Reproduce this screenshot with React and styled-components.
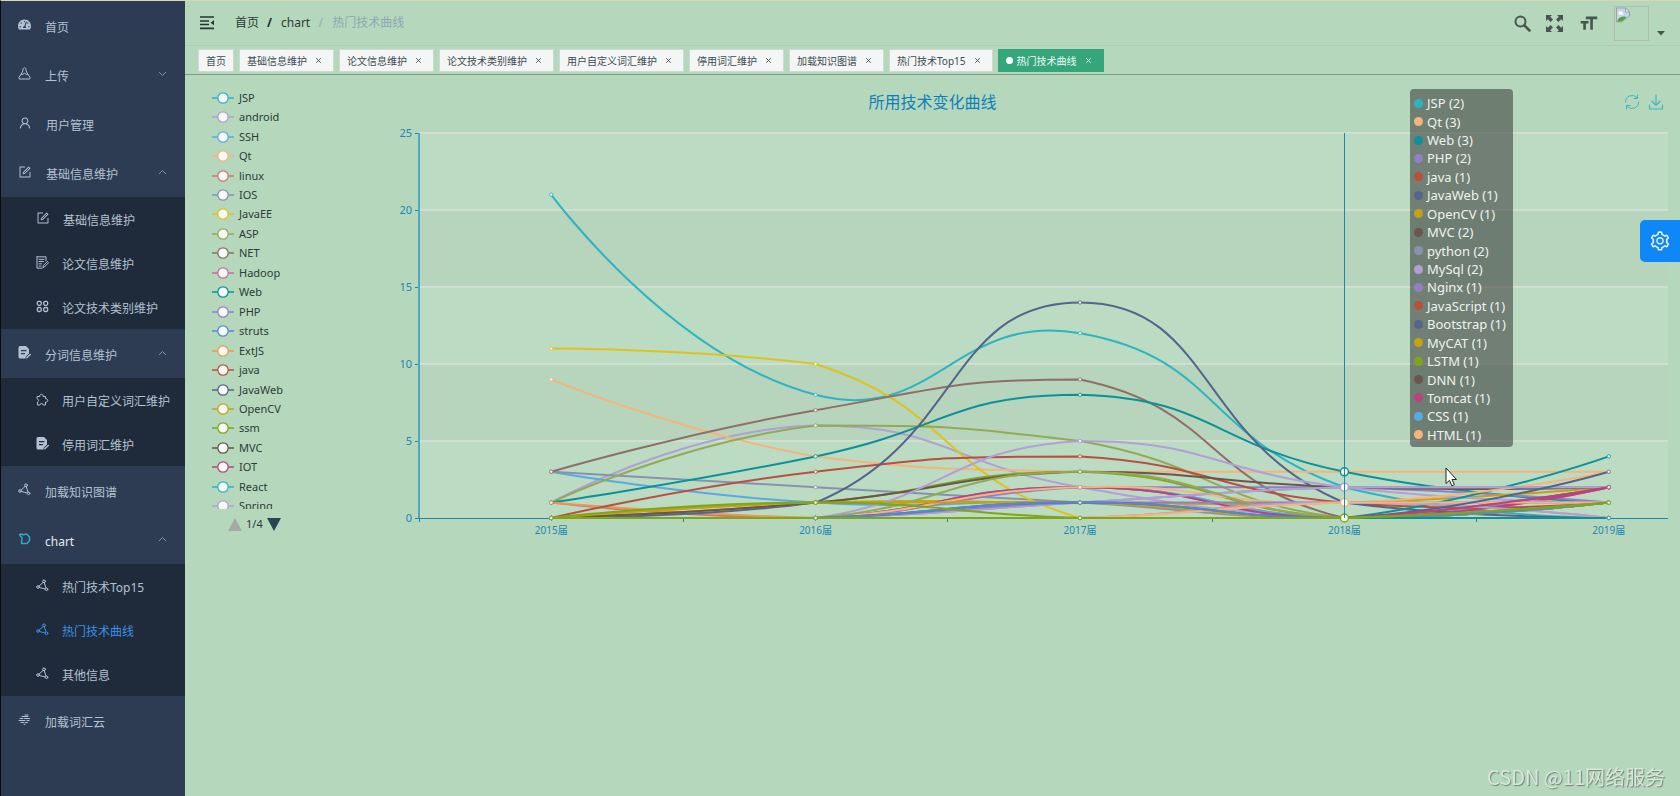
import React, { useLayoutEffect, useRef, useState } from "react";
import styled, { createGlobalStyle, css } from "styled-components";
import { FaTachometerAlt } from "react-icons/fa";
import { AiOutlineForm, AiOutlineSetting, AiOutlineUser } from "react-icons/ai";
import { MdFormatSize } from "react-icons/md";

const colors = {
  page: "#b5d8bc",
  sidebar: "#2d3c53",
  submenu: "#1f2b3a",
  menuText: "#b4c1d2",
  active: "#3b8fe4",
  axis: "#1c86b4",
};

const palette = [
  "#2fb3c2", "#b19fd6", "#59a9e4", "#f5b47c", "#cb7672", "#8693ae", "#dcc31f",
  "#92aa56", "#8f6e66", "#cf68a0", "#0a9199", "#937fc6", "#5588cc", "#eb9850",
  "#b9503f", "#54648a", "#c4a214", "#7fa519", "#6b5550", "#b9437f",
];

const GlobalStyle = createGlobalStyle`
  * { box-sizing: border-box; }
  body {
    margin: 0;
    background: ${colors.page};
    font-family: "Noto Sans", "Noto Sans CJK SC", sans-serif;
    font-size: 12px;
    color: #2c3b36;
  }
  button { font: inherit; color: inherit; background: none; border: 0; padding: 0; cursor: pointer; }
  a { color: inherit; text-decoration: none; }
  ul, ol { list-style: none; margin: 0; padding: 0; }
  svg { display: block; }
`;

const Shell = styled.div`
  display: flex;
  min-height: 100vh;
  border-top: 1px solid #d9d7b6;
  border-left: 1px solid #0a0d0c;
`;

const Sidebar = styled.nav`
  flex: 0 0 184px;
  background: ${colors.sidebar};
  color: ${colors.menuText};
`;

const itemBase = css`
  display: flex;
  align-items: center;
  width: 100%;
  white-space: nowrap;
  text-align: left;
`;

const MenuItem = styled.button`
  ${itemBase}
  height: 49px;
  padding: 0 18px 0 17px;
  gap: 14px;
  color: ${(p) => (p.$open ? "#e3e9ef" : "inherit")};
`;

const SubMenu = styled.ul`
  background: ${colors.submenu};
`;

const SubItem = styled.a`
  ${itemBase}
  height: 44px;
  padding-left: 35px;
  gap: 13px;
  color: ${(p) => (p.$active ? colors.active : "inherit")};
`;

const MenuIcon = styled.span`
  flex: 0 0 13px;
  padding-bottom: 2px;
  color: ${(p) => p.$tint || "inherit"};
`;

const MenuLabel = styled.span`
  flex: 1;
  line-height: 18px;
  padding-top: 4px;
`;

const Arrow = styled.svg`
  margin-bottom: 2px;
  transform: ${(p) => (p.$up ? "rotate(180deg)" : "none")};
`;

const Main = styled.main`
  flex: 1;
  min-width: 0;
`;

const Navbar = styled.header`
  display: flex;
  align-items: center;
  height: 45px;
  padding: 0 15px 0 14px;
  border-bottom: 1px solid #abceb3;
`;

const Breadcrumb = styled.ol`
  display: flex;
  gap: 9px;
  margin-left: 20px;
  flex: 1;
  line-height: 18px;
`;

const Crumb = styled.li`
  display: flex;
  gap: 8px;
  color: ${(p) => (p.$last ? "#90a6b4" : "#2c3b36")};
`;

const Slash = styled.span`
  font-weight: 700;
  color: ${(p) => (p.$light ? "#a3b8b4" : "#1e2a26")};
`;

const Tools = styled.div`
  display: flex;
  align-items: center;
  gap: 15px;
  color: #47554f;
`;

const Avatar = styled.button`
  display: flex;
  align-items: flex-end;
  gap: 8px;
`;

const AvatarFrame = styled.span`
  width: 35px;
  height: 35px;
  border: 1px solid #b0bdb2;
`;

const TagBar = styled.div`
  display: flex;
  align-items: center;
  gap: 5px;
  height: 29px;
  padding: 0 13px;
  border-bottom: 1px solid #7d9a84;
`;

const Tag = styled.div`
  display: flex;
  align-items: center;
  height: 23px;
  padding: 0 7px;
  font-size: 10px;
  white-space: nowrap;
  color: ${(p) => (p.$active ? "#effaf4" : "#3f4a52")};
  background: ${(p) => (p.$active ? "#35a57b" : "#f4f6f5")};
  border: 1px solid ${(p) => (p.$active ? "#35a57b" : "#cbdad2")};
`;

const Dot = styled.span`
  width: 7px;
  height: 7px;
  margin-right: 4px;
  border-radius: 50%;
  background: #fff;
`;

const TagClose = styled.button`
  margin: 1px 4px 0 8px;
  padding: 1px;
`;

const ChartPanel = styled.section`
  display: grid;
  grid-template-columns: 200px minmax(0, 1fr);
  grid-template-rows: 50px auto;
`;

const ChartHead = styled.div`
  grid-area: 1 / 1 / 2 / 3;
  display: grid;
  grid-template-columns: 1fr auto 1fr;
  align-items: center;
  padding: 3px 16px 0;
`;

const ChartTitle = styled.h1`
  grid-column: 2;
  margin: 0;
  font-size: 16px;
  font-weight: 400;
  line-height: 24px;
  color: #0f7fba;
`;

const ChartTools = styled.div`
  display: flex;
  justify-content: flex-end;
  gap: 8px;
  color: #43b3bd;
`;

const LegendBox = styled.div`
  grid-area: 1 / 1 / 3 / 2;
  padding: 13px 0 0 27px;
  z-index: 1;
  justify-self: start;
`;

const LegendClip = styled.div`
  height: 421px;
  overflow: hidden;
`;

const LegendList = styled.ul`
  display: flex;
  flex-direction: column;
  height: 428px;
`;

const LegendRow = styled.li`
  flex: 1;
  display: flex;
  align-items: center;
`;

const LegendButton = styled.button`
  display: flex;
  align-items: center;
  gap: 5px;
  font-size: 11px;
  line-height: 16px;
`;

const Pager = styled.div`
  display: flex;
  align-items: center;
  gap: 4px;
  padding: 6px 0 0 16px;
  font-size: 11px;
  line-height: 18px;
`;

const PlotBox = styled.div`
  grid-area: 2 / 2 / 3 / 3;
  position: relative;
  height: 420px;
`;

const Tooltip = styled.ul`
  position: absolute;
  top: -36px;
  display: flex;
  flex-direction: column;
  width: 103px;
  height: 358px;
  padding: 5px 4px 3px;
  border-radius: 4px;
  background: rgba(50, 50, 50, 0.54);
  color: #eef3ef;
  font-size: 13px;
  white-space: nowrap;
`;

const TooltipRow = styled.li`
  flex: 1;
  display: flex;
  align-items: center;
  gap: 4px;
  line-height: 18px;
`;

const Swatch = styled.span`
  width: 9px;
  height: 9px;
  border-radius: 50%;
  background: ${(p) => p.$color};
`;

const Pointer = styled.svg`
  position: absolute;
  top: 342px;
`;

const SettingsButton = styled.button`
  position: fixed;
  right: 0;
  top: 220px;
  display: grid;
  place-items: center;
  width: 40px;
  height: 42px;
  border-radius: 5px 0 0 5px;
  background: #0f87f6;
  color: #e8f4ff;
`;

const Watermark = styled.div`
  position: fixed;
  right: 15px;
  bottom: 4px;
  font-family: "Noto Sans CJK SC", sans-serif;
  font-size: 20px;
  line-height: 30px;
  color: #d9e6dc;
  text-shadow: 1px 1px 1px #6f8375;
`;

const stroke = { fill: "none", stroke: "currentColor", strokeWidth: 1, strokeLinejoin: "round", strokeLinecap: "round" };
const Svg = ({ size = 13, box = 13, children }) => (
  <svg width={size} height={size} viewBox={`0 0 ${box} ${box}`} aria-hidden="true">{children}</svg>
);

const icons = {
  dash: <FaTachometerAlt size={13} />,
  upload: (
    <Svg>
      <path {...stroke} d="M3.300 7 1 10.300q-.8 1.700 1 1.700h9q1.800 0 1-1.700L9.700 7M3.300 7.200 5.200 3a1.500 1.500 0 1 1 2.600 0L9.700 7.200M3.300 7.200q1.200 1.200 3.200-1 2 2.200 3.200 1" />
    </Svg>
  ),
  user: <AiOutlineUser size={14} />,
  edit: <AiOutlineForm size={14} />,
  paper: (
    <Svg>
      <path {...stroke} d="M1 .8h9v4M1 .8v11.400h5M3 3.300h5M3 5.500h4.500M3 7.800h2.500M3 10h2M7 11.500l.5-2.200L11.300 5.500l1.200 1.200-3.800 4z" />
    </Svg>
  ),
  grid: (
    <Svg>
      <g {...stroke} strokeWidth="1.300">
        <rect x="1.300" y="1.300" width="4" height="4" rx="1.500" /><rect x="7.700" y="1.300" width="4" height="4" rx="1.500" />
        <rect x="1.300" y="7.500" width="4" height="4" rx="1.500" /><rect x="7.700" y="7.500" width="4" height="4" rx="1.500" />
      </g>
    </Svg>
  ),
  doc: (
    <Svg>
      <path fill="currentColor" fillRule="evenodd" d="M2 0h6l3 3v4.500L7.500 11v1.500H2q-1.500 0-1.500-1.500V1.500Q.5 0 2 0zM3 4v1.200h5.500V4zM3 7v1.200h4V7z" />
      <path {...stroke} strokeWidth="1.400" d="M8.800 11.800 12.300 8.500" />
    </Svg>
  ),
  puzzle: (
    <Svg>
      <path {...stroke} d="M1.500 3.500h2.300a1.700 1.700 0 1 1 3.200 0h2.500v2.300a1.700 1.700 0 1 1 0 3.200v3H7a1.500 1.500 0 0 0-3 0H1.500V9a1.600 1.600 0 0 0 0-3z" />
    </Svg>
  ),
  nodes: (
    <Svg>
      <g {...stroke}>
        <circle cx="2" cy="8" r="1.300" /><circle cx="8" cy="2.300" r="1.400" /><circle cx="10.500" cy="10.300" r="1.300" />
        <path d="M3 7.200 7 3.500M8.300 3.800l1.700 5.200M3.300 8.500l6 1.500" />
      </g>
    </Svg>
  ),
  chart: (
    <Svg>
      <path {...stroke} strokeWidth="1.500" d="M1.500 2.500 4 2l1 .8L8.500 2l3 3v3.500L9 11.500H3.500L4 6z" />
    </Svg>
  ),
  cloud: (
    <Svg>
      <path {...stroke} strokeWidth="1" d="M4 3.500h6M2 5.500h3M6.500 5.500h5M1 7.500h6M9 7.500h2M3 9.500h3M7.500 9.500h2M6 11.300h1M7 2h3" />
    </Svg>
  ),
};

const menu = [
  { label: "首页", icon: "dash" },
  { label: "上传", icon: "upload", arrow: "down" },
  { label: "用户管理", icon: "user" },
  {
    label: "基础信息维护", icon: "edit", arrow: "up",
    children: [
      { label: "基础信息维护", icon: "edit" },
      { label: "论文信息维护", icon: "paper" },
      { label: "论文技术类别维护", icon: "grid" },
    ],
  },
  {
    label: "分词信息维护", icon: "doc", arrow: "up",
    children: [
      { label: "用户自定义词汇维护", icon: "puzzle" },
      { label: "停用词汇维护", icon: "doc" },
    ],
  },
  { label: "加载知识图谱", icon: "nodes" },
  {
    label: "chart", icon: "chart", arrow: "up", open: true,
    children: [
      { label: "热门技术Top15", icon: "nodes" },
      { label: "热门技术曲线", icon: "nodes", active: true },
      { label: "其他信息", icon: "nodes" },
    ],
  },
  { label: "加载词汇云", icon: "cloud" },
];

const tags = ["首页", "基础信息维护", "论文信息维护", "论文技术类别维护", "用户自定义词汇维护", "停用词汇维护", "加载知识图谱", "热门技术Top15", "热门技术曲线"];

const legend = ["JSP", "android", "SSH", "Qt", "linux", "IOS", "JavaEE", "ASP", "NET", "Hadoop", "Web", "PHP", "struts", "ExtJS", "java", "JavaWeb", "OpenCV", "ssm", "MVC", "IOT", "React", "Spring"];

const tooltipRows = [
  ["JSP", 2, 0], ["Qt", 3, 3], ["Web", 3, 10], ["PHP", 2, 11], ["java", 1, 14], ["JavaWeb", 1, 15],
  ["OpenCV", 1, 16], ["MVC", 2, 18], ["python", 2, 5], ["MySql", 2, 1], ["Nginx", 1, 11],
  ["JavaScript", 1, 14], ["Bootstrap", 1, 15], ["MyCAT", 1, 16], ["LSTM", 1, 17], ["DNN", 1, 18],
  ["Tomcat", 1, 19], ["CSS", 1, 2], ["HTML", 1, 3],
];

const years = ["2015届", "2016届", "2017届", "2018届", "2019届"];

// [palette index, values per year], drawn from back to front
const series = [
  [0, [21, 8, 12, 2, 0]],
  [1, [1, 6, 2, 0, 0]],
  [2, [3, 1, 1, 0, 1]],
  [3, [9, 4, 3, 3, 3]],
  [4, [1, 0, 2, 0, 1]],
  [5, [3, 2, 1, 0, 2]],
  [6, [11, 10, 0, 0, 0]],
  [7, [1, 6, 5, 0, 1]],
  [8, [3, 7, 9, 0, 1]],
  [9, [0, 0, 2, 0, 2]],
  [10, [1, 4, 8, 3, 1]],
  [11, [0, 0, 2, 2, 1]],
  [2, [0, 0, 2, 0, 1]],
  [13, [1, 0, 0, 1, 0]],
  [14, [0, 3, 4, 1, 1]],
  [15, [0, 1, 14, 1, 0]],
  [16, [0, 1, 1, 1, 2]],
  [17, [0, 1, 3, 0, 1]],
  [18, [0, 1, 3, 2, 2]],
  [19, [0, 0, 2, 0, 2]],
  [5, [0, 0, 1, 2, 2]],
  [1, [0, 0, 5, 2, 1]],
  [10, [0, 0, 0, 0, 4]],
  [3, [0, 0, 2, 1, 3]],
  [1, [0, 0, 1, 2, 2]],
  [11, [0, 0, 1, 1, 1]],
  [7, [0, 0, 3, 0, 1]],
  [14, [0, 0, 0, 0, 2]],
  [16, [0, 1, 1, 0, 1]],
  [1, [0, 0, 0, 1, 0]],
  [3, [0, 0, 0, 1, 1]],
  [15, [0, 0, 1, 0, 3]],
  [12, [0, 0, 1, 0, 1]],
  [19, [0, 0, 0, 0, 2]],
  [10, [0, 0, 0, 0, 0]],
  [17, [0, 1, 0, 0, 1]],
  [17, [0, 0, 0, 0, 1]],
];

const TOP = 8;
const BOTTOM = 393;
const LEFT = 34;
const yAt = (v) => BOTTOM - (v * (BOTTOM - TOP)) / 25;

function smoothPath(points) {
  const ys = points.map((p) => p[1]);
  const lo = Math.min(...ys);
  const hi = Math.max(...ys);
  const clamp = (y) => Math.max(lo, Math.min(hi, y));
  let d = `M${points[0]}`;
  let out = points[0];
  for (let i = 1; i < points.length; i++) {
    const p = points[i];
    const prev = points[i - 1];
    const next = points[i + 1];
    let into = p;
    let nextOut = p;
    if (next) {
      const a = Math.hypot(p[0] - prev[0], p[1] - prev[1]);
      const b = Math.hypot(next[0] - p[0], next[1] - p[1]);
      const r = b / (a + b);
      const vx = next[0] - prev[0];
      const vy = next[1] - prev[1];
      into = [p[0] - vx * 0.5 * (1 - r), clamp(p[1] - vy * 0.5 * (1 - r))];
      nextOut = [p[0] + vx * 0.5 * r, clamp(p[1] + vy * 0.5 * r)];
    }
    d += `C${out} ${into} ${p}`;
    out = nextOut;
  }
  return d;
}

function useWidth() {
  const ref = useRef(null);
  const [width, setWidth] = useState(0);
  useLayoutEffect(() => {
    const measure = () => setWidth(ref.current.clientWidth);
    measure();
    const observer = new ResizeObserver(measure);
    observer.observe(ref.current);
    return () => observer.disconnect();
  }, []);
  return [ref, width];
}

function LineChart() {
  const [ref, width] = useWidth();
  const right = width - 12;
  const band = (right - LEFT + 73) / 5;
  const xAt = (i) => LEFT + band * (i + 0.5);
  const focus = xAt(3);
  return (
    <PlotBox ref={ref}>
      {width > 0 && (
        <>
          <svg width={width} height="420" role="img" aria-label="所用技术变化曲线">
            {[0, 5, 10, 15, 20].map((v) => (
              <rect key={v} x={LEFT} y={yAt(v + 5)} width={right - LEFT} height={77} fill={v % 10 ? "#b6d5bc" : "#bcdbc3"} />
            ))}
            {[5, 10, 15, 20, 25].map((v) => (
              <line key={v} x1={LEFT} x2={right} y1={yAt(v)} y2={yAt(v)} stroke="#cfdfd2" strokeWidth="2" />
            ))}
            <g stroke={colors.axis} shapeRendering="crispEdges">
              <line x1={LEFT} x2={right} y1={BOTTOM} y2={BOTTOM} />
              {[0, 1, 2, 3, 4].map((i) => (
                <line key={i} x1={LEFT + band * i} x2={LEFT + band * i} y1={BOTTOM} y2={BOTTOM + 4} />
              ))}
              {[0, 5, 10, 15, 20, 25].map((v) => (
                <line key={v} x1={LEFT - 4} x2={LEFT} y1={yAt(v)} y2={yAt(v)} />
              ))}
            </g>
            <line x1={LEFT} x2={LEFT} y1={TOP} y2={BOTTOM} stroke="#4fa9c2" strokeWidth="2" />
            <g fill={colors.axis} fontSize="11">
              {[0, 5, 10, 15, 20, 25].map((v) => (
                <text key={v} x={LEFT - 7} y={yAt(v) + 4} textAnchor="end">{v}</text>
              ))}
              {years.map((label, i) => (
                <text key={label} x={xAt(i)} y={BOTTOM + 16} textAnchor="middle" fontSize="10">{label}</text>
              ))}
            </g>
            {series.map(([color, values], n) => (
              <path key={n} d={smoothPath(values.map((v, i) => [xAt(i), yAt(v)]))} fill="none" stroke={palette[color]} strokeWidth="2" />
            ))}
            {series.map(([color, values], n) =>
              values.map((v, i) => (
                <circle key={`${n}-${i}`} cx={xAt(i)} cy={yAt(v)} r="1.700" fill="#edf4ee" stroke={palette[color]} strokeWidth="0.800" />
              ))
            )}
            {[[3, 10], [2, 1], [1, 3], [0, 17]].map(([v, color]) => (
              <circle key={v} cx={focus} cy={yAt(v)} r="4" fill="#fbfdfb" stroke={palette[color]} strokeWidth="1.500" />
            ))}
            <line x1={focus} x2={focus} y1={TOP} y2={BOTTOM} stroke={colors.axis} shapeRendering="crispEdges" />
          </svg>
          <Tooltip style={{ left: Math.round(focus + 66) }}>
            {tooltipRows.map(([name, value, color]) => (
              <TooltipRow key={name}>
                <Swatch $color={palette[color]} />
                {name} ({value})
              </TooltipRow>
            ))}
          </Tooltip>
          <Pointer width="14" height="22" viewBox="0 0 14 22" style={{ left: Math.round(focus + 100) }}>
            <path d="M2 1v15.500l3.500-3.200 2.300 5.500 2.500-1.100-2.300-5.200h4.500z" fill="#fff" stroke="#1e2624" strokeWidth="1" />
          </Pointer>
        </>
      )}
    </PlotBox>
  );
}

function Item({ entry }) {
  return (
    <li>
      <MenuItem type="button" $open={entry.open} aria-expanded={entry.arrow ? entry.arrow === "up" : undefined}>
        <MenuIcon $tint={entry.open && "#2fa9c6"}>{icons[entry.icon]}</MenuIcon>
        <MenuLabel>{entry.label}</MenuLabel>
        {entry.arrow && (
          <Arrow width="9" height="6" viewBox="0 0 9 6" $up={entry.arrow === "up"} aria-hidden="true">
            <path d="M1 1l3.500 3.500L8 1" fill="none" stroke="#8391a3" />
          </Arrow>
        )}
      </MenuItem>
      {entry.children && (
        <SubMenu>
          {entry.children.map((child) => (
            <li key={child.label}>
              <SubItem href="#" $active={child.active}>
                <MenuIcon>{icons[child.icon]}</MenuIcon>
                <MenuLabel>{child.label}</MenuLabel>
              </SubItem>
            </li>
          ))}
        </SubMenu>
      )}
    </li>
  );
}

export default function App() {
  return (
    <Shell>
      <GlobalStyle />
      <Sidebar>
        <ul>
          {menu.map((entry) => <Item key={entry.label} entry={entry} />)}
        </ul>
      </Sidebar>
      <Main>
        <Navbar>
          <button type="button" aria-label="menu">
            <Svg size={16} box={16}>
              <path d="M1 2h14M1 6h9M1 9.500h9M1 13.300h14" stroke="#26332e" strokeWidth="1.700" />
              <path d="M15 5.200v5L11.500 7.700z" fill="#26332e" />
            </Svg>
          </button>
          <Breadcrumb>
            <Crumb><a href="#">首页</a><Slash>/</Slash></Crumb>
            <Crumb><a href="#">chart</a><Slash $light>/</Slash></Crumb>
            <Crumb $last>热门技术曲线</Crumb>
          </Breadcrumb>
          <Tools>
            <button type="button" aria-label="search">
              <Svg size={17} box={17}>
                <circle cx="6.500" cy="6.500" r="5" fill="none" stroke="currentColor" strokeWidth="2" />
                <path d="M10.300 10.300 15.500 15.500" stroke="currentColor" strokeWidth="2.600" strokeLinecap="round" />
              </Svg>
            </button>
            <button type="button" aria-label="fullscreen">
              <Svg size={17} box={17}>
                <path fill="currentColor" d="M0 0h6L4.200 1.800 7 4.600 4.600 7 1.800 4.200 0 6zM17 0v6l-1.800-1.800L12.400 7 10 4.600l2.800-2.800L11 0zM0 17v-6l1.800 1.800L4.600 10 7 12.400l-2.800 2.800L6 17zM17 17h-6l1.800-1.800L10 12.400l2.400-2.400 2.800 2.800L17 11z" />
              </Svg>
            </button>
            <button type="button" aria-label="font size"><MdFormatSize size={21} /></button>
            <Avatar type="button" aria-label="account">
              <AvatarFrame>
                <Svg size={16} box={16}>
                  <path d="M1.500 1h9l4 4v4l-3 2-2 2-3 2h-5z" fill="#c3d5ee" stroke="#98a5a4" />
                  <path d="M10.500 1v4h4z" fill="#f4f7f5" stroke="#98a5a4" />
                  <path d="M3.500 6.500a2 2 0 0 1 4-.5q1.500.2 1 1.500h-5z" fill="#fff" />
                  <path d="M2 14.500q2-5.500 8-5l1.500 1-5 4z" fill="#55a031" />
                </Svg>
              </AvatarFrame>
              <svg width="8" height="11" viewBox="0 0 8 11" aria-hidden="true"><path d="M0 1h8L4 5.500z" fill="#47554f" /></svg>
            </Avatar>
          </Tools>
        </Navbar>
        <TagBar>
          {tags.map((label, i) => {
            const active = i === tags.length - 1;
            return (
              <Tag key={label} $active={active}>
                {active && <Dot />}
                <a href="#">{label}</a>
                {i > 0 && (
                  <TagClose type="button" aria-label={`close ${label}`}>
                    <Svg size={5} box={5}><path {...stroke} strokeWidth="0.900" d="M.5.500l4 4M4.500.500l-4 4" /></Svg>
                  </TagClose>
                )}
              </Tag>
            );
          })}
        </TagBar>
        <ChartPanel>
          <ChartHead>
            <ChartTitle>所用技术变化曲线</ChartTitle>
            <ChartTools>
              <button type="button" aria-label="restore">
                <Svg size={16} box={16}>
                  <path {...stroke} d="M1.500 8A6.500 6.500 0 0 1 13 3.800M14.500 8A6.500 6.500 0 0 1 3 12.200M13.500 1v3.500H10M2.500 15v-3.500H6" />
                </Svg>
              </button>
              <button type="button" aria-label="save">
                <Svg size={16} box={16}>
                  <path {...stroke} strokeWidth="1.200" d="M8 1v10M3.800 7.200 8 11.300l4.200-4.100M1.500 11v4h13v-4" />
                </Svg>
              </button>
            </ChartTools>
          </ChartHead>
          <LegendBox>
            <LegendClip>
              <LegendList>
                {legend.map((name, i) => (
                  <LegendRow key={name}>
                    <LegendButton type="button">
                      <svg width="22" height="14" viewBox="0 0 22 14" stroke={palette[i % palette.length]} aria-hidden="true">
                        <path d="M0 7h22" strokeWidth="1.500" />
                        <circle cx="11" cy="7" r="5.200" fill="#f7f9f7" strokeWidth="1.300" />
                      </svg>
                      {name}
                    </LegendButton>
                  </LegendRow>
                ))}
              </LegendList>
            </LegendClip>
            <Pager>
              <button type="button" aria-label="previous page"><svg width="14" height="13"><path d="M7 0l7 13H0z" fill="#a3aaa3" /></svg></button>
              1/4
              <button type="button" aria-label="next page"><svg width="14" height="13"><path d="M0 0h14L7 13z" fill="#2a4456" /></svg></button>
            </Pager>
          </LegendBox>
          <LineChart />
        </ChartPanel>
      </Main>
      <SettingsButton type="button" aria-label="settings"><AiOutlineSetting size={22} /></SettingsButton>
      <Watermark>CSDN @11网络服务</Watermark>
    </Shell>
  );
}
